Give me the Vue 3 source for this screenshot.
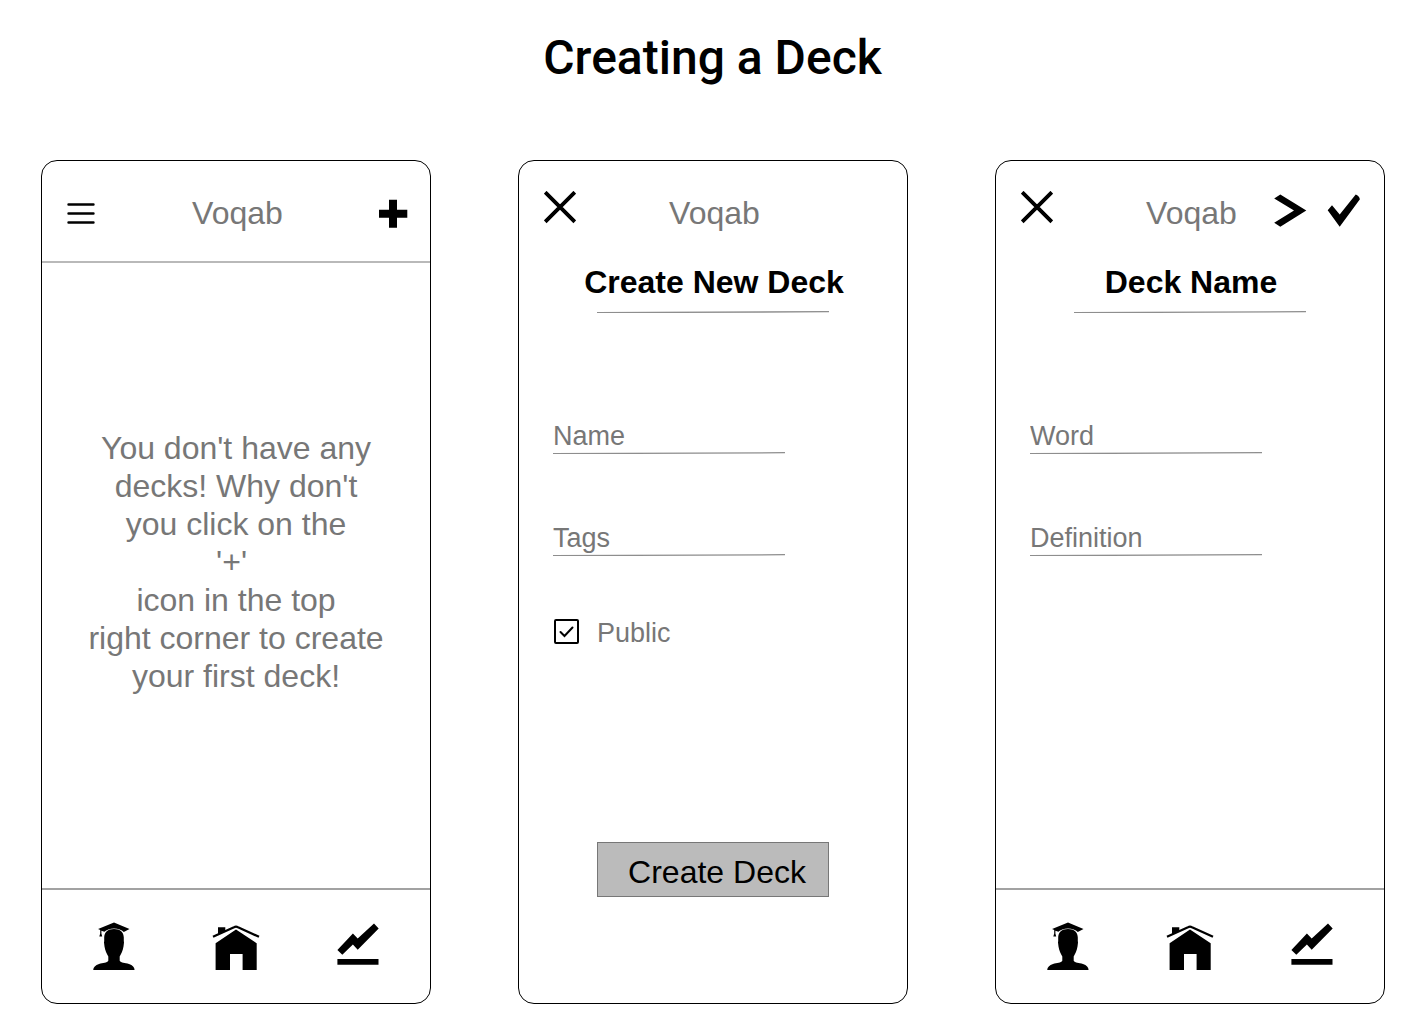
<script setup>
import { ref, h } from 'vue'

const name = ref('')
const tags = ref('')
const word = ref('')
const definition = ref('')
const isPublic = ref(true)

const svg = (w, hgt, children) =>
  h('svg', { class: 'icon', width: w, height: hgt, viewBox: `0 0 ${w} ${hgt}`, 'aria-hidden': 'true' }, children)

const CloseIcon = () =>
  svg(32, 44, [h('path', { d: 'M1.2 1.2 30.8 30.8M30.8 1.2 1.2 30.8', stroke: '#000', 'stroke-width': 3.8, fill: 'none' })])

const StudentIcon = () =>
  svg(48, 48, [
    h('path', { d: 'M24 .5 39.5 7 33.8 10C31.6 7.7 28.2 6.4 24 6.4S16.4 7.7 14.4 9.7L11.4 8.7V11.5L12.2 14.4H9.3L10.2 11.5V8L8.1 7Z' }),
    h('path', { d: 'M24 6.9C30.2 6.9 33.8 10.2 33.8 15.5V19L34 20.5 33.5 24.5C32.9 29 31 32 29.7 34.5V38.8C31 41 35 40.8 39 42 42.8 43.4 44.6 45.4 44.6 48.3H3.2C3.2 45.4 5.200 43.400 9 42 13 40.800 17 41 18.300 38.800V34.500C17 32 15.100 29 14.500 24.500L14 20.500 14.200 19V15.500C14.200 10.200 17.800 6.900 24 6.900Z' })
  ])

const HomeIcon = () =>
  svg(48, 48, [
    h('path', { d: 'M1 14.8 22 5.2Q24 4.2 26 5.2L47 14.8', stroke: '#000', 'stroke-width': 2.3, fill: 'none' }),
    h('path', { d: 'M6 5.3H13.3V9L6 12.5Z' }),
    h('path', { d: 'M24 7.5 44.7 21.3V48.3H30.6V32H18V48.3H3.6V21.3Z' })
  ])

const StatsIcon = () =>
  svg(48, 48, [
    h('path', { d: 'M3.4 27.9 18.9 11.4 23.7 16.4 40 1.4 44.7 6.5 23.7 27.7 18.9 22.5 8.3 32.8Z' }),
    h('path', { d: 'M3.4 37H44.5V42.8H3.4Z' })
  ])

const Rule = () =>
  h('svg', { class: 'rule', viewBox: '0 0 232 2', preserveAspectRatio: 'none', 'aria-hidden': 'true' }, [
    h('path', { d: 'M0 1.7 232 .7', stroke: '#8e8e8e', 'stroke-width': 1.3 })
  ])

const tabs = [
  { label: 'Profile', icon: StudentIcon },
  { label: 'Home', icon: HomeIcon },
  { label: 'Statistics', icon: StatsIcon }
]
</script>

<template>
  <main class="page">
    <h1>Creating a Deck</h1>

    <div class="phones">
      <section class="phone">
        <header class="bar ruled">
          <button type="button" aria-label="Menu">
            <svg width="28" height="28" viewBox="0 0 28 28">
              <path d="M1.5 5.5H26.500M1.500 14.500H26.500M1.500 23.500H26.500" stroke="#000" stroke-width="2.4" stroke-linecap="round" />
            </svg>
          </button>
          <span class="brand">Voqab</span>
          <div class="actions">
            <button type="button" aria-label="Add deck">
              <svg width="29" height="29" viewBox="0 0 29 29">
                <path d="M10 .7H18V10.700H28.300V18.700H18V28.700H10V18.700H0V10.700H10Z" />
              </svg>
            </button>
          </div>
        </header>
        <div class="empty">
          <p>
            You don't have any<br />decks! Why don't<br />you click on the<br />'+'&nbsp;<br />icon in the top<br />right
            corner to create<br />your first deck!
          </p>
        </div>
        <nav class="tabs">
          <a v-for="tab in tabs" :key="tab.label" href="#" :aria-label="tab.label"><component :is="tab.icon" /></a>
        </nav>
      </section>

      <section class="phone">
        <header class="bar">
          <button type="button" aria-label="Close"><CloseIcon /></button>
          <span class="brand">Voqab</span>
        </header>
        <div class="heading">
          <h2>Create New Deck</h2>
          <Rule />
        </div>
        <form class="form" @submit.prevent>
          <div class="field">
            <input v-model="name" type="text" placeholder="Name" aria-label="Name" />
            <Rule />
          </div>
          <div class="field">
            <input v-model="tags" type="text" placeholder="Tags" aria-label="Tags" />
            <Rule />
          </div>
          <label class="check">
            <span class="box">
              <input v-model="isPublic" type="checkbox" />
              <svg v-if="isPublic" width="25" height="25" viewBox="0 0 25 25">
                <path d="M6.500 13 10.500 17 18.500 8.500" fill="none" stroke="#000" stroke-width="2" stroke-linecap="round" />
              </svg>
            </span>
            Public
          </label>
          <button type="submit" class="submit">Create Deck</button>
        </form>
      </section>

      <section class="phone">
        <header class="bar">
          <button type="button" aria-label="Close"><CloseIcon /></button>
          <span class="brand">Voqab</span>
          <div class="actions">
            <button type="button" aria-label="Next card">
              <svg width="36" height="40" viewBox="0 0 36 40">
                <path d="M.2 5.500 6.300 1.400 32.300 17.500 6.300 33.700 .2 29.700 20 17.500Z" />
              </svg>
            </button>
            <button type="button" aria-label="Done">
              <svg width="36" height="40" viewBox="0 0 36 40">
                <path d="M1.700 17.300 6 12.200 13.700 21.500 29.700 1.500Q33 2.500 33.900 6.300L13.700 33.800Z" />
              </svg>
            </button>
          </div>
        </header>
        <div class="heading">
          <h2>Deck Name</h2>
          <Rule />
        </div>
        <form class="form" @submit.prevent>
          <div class="field">
            <input v-model="word" type="text" placeholder="Word" aria-label="Word" />
            <Rule />
          </div>
          <div class="field">
            <input v-model="definition" type="text" placeholder="Definition" aria-label="Definition" />
            <Rule />
          </div>
        </form>
        <nav class="tabs">
          <a v-for="tab in tabs" :key="tab.label" href="#" :aria-label="tab.label"><component :is="tab.icon" /></a>
        </nav>
      </section>
    </div>
  </main>
</template>

<style>
body {
  margin: 0;
  background: #fff;
}

.icon {
  display: block;
}
</style>

<style scoped>
.page {
  box-sizing: border-box;
  min-height: 100vh;
  padding: 30px 40px 25px;
  display: flex;
  flex-direction: column;
  gap: 74px;
  color: #000;
  font: 32px/38px "Liberation Sans", Arial, sans-serif;
}

h1 {
  margin: 0;
  text-align: center;
  font: 500 48px/56px Roboto, sans-serif;
}

.phones {
  flex: 1;
  display: grid;
  grid-template-columns: repeat(3, minmax(0, 1fr));
  gap: 87px;
  padding-left: 1px;
}

.phone {
  display: flex;
  flex-direction: column;
  border: 1px solid #000;
  border-radius: 16px;
  overflow: hidden;
}

button {
  padding: 0;
  border: 0;
  background: none;
  color: inherit;
  font: inherit;
  cursor: pointer;
}

svg {
  display: block;
}

.bar {
  box-sizing: border-box;
  height: 100px;
  padding: 4px 22px 0 25px;
  display: grid;
  grid-template-columns: 1fr auto 1fr;
  align-items: center;
  justify-items: start;
}

.ruled {
  height: 102px;
  border-bottom: 2px solid #b9b9b9;
}

.brand {
  color: #777;
}

.actions {
  justify-self: end;
  display: flex;
  gap: 16px;
}

.empty {
  flex: 1;
  display: flex;
  align-items: center;
  justify-content: center;
  padding-bottom: 27px;
  text-align: center;
  color: #777;
}

.empty p {
  margin: 0;
}

.tabs {
  margin-top: auto;
  padding: 32px 48px 33px;
  display: flex;
  justify-content: space-between;
  border-top: 2px solid #a2a2a2;
}

.heading {
  padding-top: 2px;
  display: flex;
  flex-direction: column;
  align-items: center;
  gap: 10px;
}

h2 {
  margin: 0;
  padding-left: 2px;
  font-size: 32px;
  font-weight: bold;
}

.rule {
  width: 232px;
  height: 2px;
}

.form {
  flex: 1;
  padding: 107px 34px 0;
  display: flex;
  flex-direction: column;
}

.field {
  width: 232px;
  margin-bottom: 68px;
}

.field input {
  display: block;
  box-sizing: border-box;
  width: 100%;
  height: 32px;
  padding: 0;
  border: 0;
  outline: 0;
  background: none;
  color: #000;
  font: 27px/32px "Liberation Sans", Arial, sans-serif;
}

.field input::placeholder {
  color: #777;
  opacity: 1;
}

.check {
  margin-top: -7px;
  display: flex;
  align-items: center;
  gap: 18px;
  color: #777;
  font-size: 27px;
  line-height: 32px;
}

.box {
  display: grid;
  margin: 0 0 3px 1px;
}

.box > * {
  grid-area: 1 / 1;
}

.box input {
  appearance: none;
  box-sizing: border-box;
  width: 25px;
  height: 25px;
  margin: 0;
  border: 2px solid #000;
  border-radius: 2px;
}

.box svg {
  pointer-events: none;
}

.submit {
  box-sizing: border-box;
  width: 232px;
  height: 55px;
  margin: auto auto 106px;
  padding: 4px 0 0 8px;
  border: 1px solid #777;
  background: #bbb;
}
</style>
